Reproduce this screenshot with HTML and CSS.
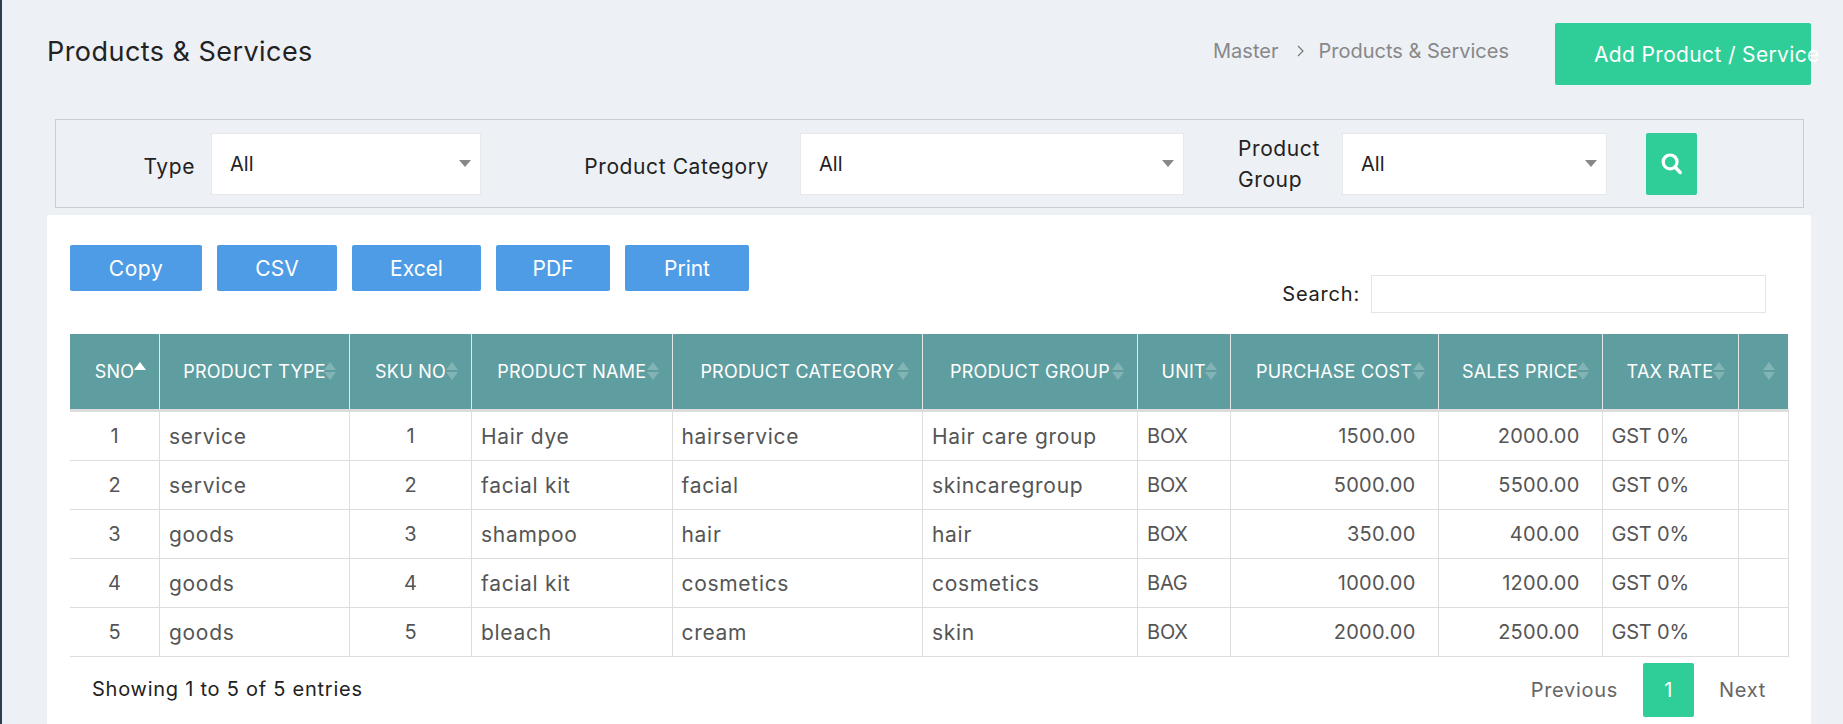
FILE: index.html
```html
<!DOCTYPE html>
<html lang="en">
<head>
    <meta charset="UTF-8">
    <meta name="viewport" content="width=device-width, initial-scale=1.0">
    <title>Products &amp; Services</title>
    <link rel="stylesheet" href="styles.css">
</head>
<body>
    <div class="page">
        <div class="page-header">
            <h1 class="page-title">Products &amp; Services</h1>
            <div class="breadcrumb">
                <span>Master</span>
                <svg class="crumb-sep" width="7" height="12" viewBox="0 0 7 12"><path d="M1 1l5 5-5 5" fill="none" stroke="#777" stroke-width="1.2"/></svg>
                <span>Products &amp; Services</span>
            </div>
            <button class="btn-add">Add Product / Service</button>
        </div>

        <div class="filter-bar">
            <label class="filter-label label-type">Type</label>
            <div class="select select-type">All</div>
            <label class="filter-label label-category">Product Category</label>
            <div class="select select-category">All</div>
            <label class="filter-label label-group">Product Group</label>
            <div class="select select-group">All</div>
            <button class="btn-search">
                <svg width="23" height="23" viewBox="0 0 20 20"><circle cx="8.8" cy="8.6" r="6" fill="none" stroke="#fff" stroke-width="2.8"/><path d="M13 13l4.6 4.8" stroke="#fff" stroke-width="3" stroke-linecap="round"/></svg>
            </button>
        </div>

        <div class="card">
            <div class="toolbar">
                <div class="export-buttons">
                    <button class="btn-export btn-copy">Copy</button>
                    <button class="btn-export btn-csv">CSV</button>
                    <button class="btn-export btn-excel">Excel</button>
                    <button class="btn-export btn-pdf">PDF</button>
                    <button class="btn-export btn-print">Print</button>
                </div>
                <div class="search-box">
                    <label>Search:</label>
                    <input type="text">
                </div>
            </div>

            <table class="data-table">
                <colgroup>
                    <col class="col-sno"><col class="col-type"><col class="col-sku"><col class="col-name"><col class="col-cat"><col class="col-group"><col class="col-unit"><col class="col-cost"><col class="col-price"><col class="col-tax"><col class="col-action">
                </colgroup>
                <thead>
                    <tr>
                        <th class="sort-active">SNO</th>
                        <th>PRODUCT TYPE</th>
                        <th>SKU NO</th>
                        <th>PRODUCT NAME</th>
                        <th>PRODUCT CATEGORY</th>
                        <th>PRODUCT GROUP</th>
                        <th>UNIT</th>
                        <th>PURCHASE COST</th>
                        <th>SALES PRICE</th>
                        <th>TAX RATE</th>
                        <th></th>
                    </tr>
                </thead>
                <tbody>
                    <tr><td class="center">1</td><td>service</td><td class="center">1</td><td>Hair dye</td><td>hairservice</td><td>Hair care group</td><td class="caps">BOX</td><td class="num">1500.00</td><td class="num">2000.00</td><td class="caps">GST 0%</td><td></td></tr>
                    <tr><td class="center">2</td><td>service</td><td class="center">2</td><td>facial kit</td><td>facial</td><td>skincaregroup</td><td class="caps">BOX</td><td class="num">5000.00</td><td class="num">5500.00</td><td class="caps">GST 0%</td><td></td></tr>
                    <tr><td class="center">3</td><td>goods</td><td class="center">3</td><td>shampoo</td><td>hair</td><td>hair</td><td class="caps">BOX</td><td class="num">350.00</td><td class="num">400.00</td><td class="caps">GST 0%</td><td></td></tr>
                    <tr><td class="center">4</td><td>goods</td><td class="center">4</td><td>facial kit</td><td>cosmetics</td><td>cosmetics</td><td class="caps">BAG</td><td class="num">1000.00</td><td class="num">1200.00</td><td class="caps">GST 0%</td><td></td></tr>
                    <tr><td class="center">5</td><td>goods</td><td class="center">5</td><td>bleach</td><td>cream</td><td>skin</td><td class="caps">BOX</td><td class="num">2000.00</td><td class="num">2500.00</td><td class="caps">GST 0%</td><td></td></tr>
                </tbody>
            </table>

            <div class="table-footer">
                <div class="table-info">Showing 1 to 5 of 5 entries</div>
                <div class="pagination">
                    <span class="page-link link-prev">Previous</span>
                    <span class="page-current">1</span>
                    <span class="page-link link-next">Next</span>
                </div>
            </div>
        </div>
    </div>
</body>
</html>
```

FILE: styles.css
```css
body {
    font-family: 'Inter', 'Liberation Sans', sans-serif;
    margin: 0;
    padding: 0;
    background: #edf0f5;
    color: #222;
    height: 100vh;
    overflow: hidden;
}

button {
    font-family: inherit;
    border: none;
    cursor: pointer;
}

.page {
    border-left: 2px solid #2c3e50;
    height: 100vh;
    box-sizing: border-box;
    padding: 23px 32px 0 45px;
    overflow: hidden;
}

/* header */
.page-header {
    display: flex;
    align-items: flex-start;
    height: 62px;
}

.page-title {
    margin: 13px 0 0;
    font-size: 27px;
    line-height: 32px;
    letter-spacing: 0.45px;
    font-weight: 400;
    color: #222;
    flex: 1;
}

.breadcrumb {
    display: flex;
    align-items: center;
    gap: 14px;
    margin: 16px 46px 0 0;
    font-size: 20px;
    line-height: 24px;
    color: #888;
}

.crumb-sep {
    margin-left: 5px;
}

.btn-add {
    width: 256px;
    height: 62px;
    padding: 0 0 0 39px;
    background: #2fce98;
    color: #fff;
    font-size: 21px;
    letter-spacing: 0.35px;
    text-align: left;
    white-space: nowrap;
    border-radius: 2px;
    overflow: visible;
}

/* filter */
.filter-bar {
    display: flex;
    align-items: center;
    height: 89px;
    box-sizing: border-box;
    margin: 34px 7px 0 8px;
    border: 1px solid #c9cdd1;
}

.filter-label {
    font-size: 21px;
    line-height: 31px;
    letter-spacing: 0.6px;
    color: #222;
}

.label-type {
    width: 139px;
    margin-top: 5px;
    text-align: right;
}

.label-category {
    width: 288px;
    margin-top: 5px;
    text-align: right;
    white-space: nowrap;
}

.label-group {
    width: 85px;
    margin-left: 54px;
    margin-right: -4px;
}

.select {
    position: relative;
    height: 62px;
    box-sizing: border-box;
    padding: 0 18px;
    line-height: 60px;
    font-size: 20px;
    background: #fff;
    border: 1px solid #e6e8ea;
    color: #222;
}

.select::after {
    content: "";
    position: absolute;
    right: 9px;
    top: 26px;
    border-left: 6px solid transparent;
    border-right: 6px solid transparent;
    border-top: 7px solid #888;
}

.select-type {
    width: 270px;
    margin-left: 16px;
}

.select-category {
    width: 384px;
    margin-left: 31px;
}

.select-group {
    width: 265px;
    margin-left: 23px;
}

.btn-search {
    width: 51px;
    height: 62px;
    margin-left: 39px;
    padding: 0;
    background: #2fce98;
    border-radius: 2px;
    display: flex;
    align-items: center;
    justify-content: center;
}

/* card */
.card {
    margin-top: 7px;
    height: 600px;
    box-sizing: border-box;
    padding: 30px 23px 0;
    background: #fff;
    border-radius: 3px;
}

.toolbar {
    display: flex;
    justify-content: space-between;
    align-items: flex-start;
    height: 89px;
}

.export-buttons {
    display: flex;
}

.btn-export {
    height: 46px;
    padding: 0;
    background: #4f9ce6;
    color: #fff;
    font-size: 21px;
    border-radius: 2px;
}

.btn-copy { width: 132px; letter-spacing: 0.6px; }
.btn-csv { width: 120px; margin-left: 15px; }
.btn-excel { width: 129px; margin-left: 15px; }
.btn-pdf { width: 114px; margin-left: 15px; }
.btn-print { width: 124px; margin-left: 15px; }

.search-box {
    display: flex;
    align-items: center;
    gap: 11px;
    margin: 30px 22px 0 0;
    font-size: 20px;
    letter-spacing: 0.8px;
    color: #222;
}

.search-box input {
    width: 395px;
    height: 38px;
    box-sizing: border-box;
    border: 1px solid #e3e5e7;
    background: #fff;
    outline: none;
}

/* table */
.data-table {
    table-layout: fixed;
    width: 1718px;
    border-collapse: collapse;
    font-size: 21px;
    letter-spacing: 0.7px;
    color: #555;
}

.col-sno { width: 89.5px; }
.col-type { width: 190px; }
.col-sku { width: 122px; }
.col-name { width: 200.5px; }
.col-cat { width: 250.5px; }
.col-group { width: 215px; }
.col-unit { width: 92.5px; }
.col-cost { width: 208px; }
.col-price { width: 164px; }
.col-tax { width: 136px; }
.col-action { width: 50px; }

.data-table th {
    position: relative;
    height: 75px;
    padding: 0;
    background: #5f9ea0;
    color: #fff;
    font-size: 18px;
    letter-spacing: 0.25px;
    font-weight: 400;
    text-align: center;
    border-left: 1px solid #e3e6e6;
    border-bottom: 3px solid #dddddd;
    white-space: nowrap;
}

.data-table th:first-child {
    border-left: none;
}

/* sort arrows */
.data-table th::before,
.data-table th::after {
    content: "";
    position: absolute;
    right: 13px;
    border-left: 6px solid transparent;
    border-right: 6px solid transparent;
}

.data-table th::before {
    top: 28px;
    border-bottom: 8px solid rgba(255, 255, 255, 0.22);
}

.data-table th::after {
    top: 38px;
    border-top: 8px solid rgba(255, 255, 255, 0.22);
}

.data-table th.sort-active::before {
    border-bottom-color: #fff;
}

.data-table th.sort-active::after {
    display: none;
}

.data-table td {
    height: 48px;
    padding: 0 9px;
    border: 1px solid #dddddd;
    white-space: nowrap;
}

.data-table td:first-child {
    border-left: none;
}

.data-table td.center {
    text-align: center;
    font-size: 20px;
    letter-spacing: 0;
}

.data-table td.caps {
    font-size: 20px;
    letter-spacing: -0.2px;
}

.data-table td.num {
    text-align: right;
    padding-right: 22px;
    font-size: 20px;
    letter-spacing: 0.25px;
}

/* footer */
.table-footer {
    display: flex;
    justify-content: space-between;
    align-items: center;
    margin-top: 6px;
    padding: 0 22px;
}

.table-info {
    font-size: 20px;
    letter-spacing: 0.75px;
    color: #222;
    padding-bottom: 3px;
}

.pagination {
    display: flex;
    align-items: center;
    font-size: 20px;
    letter-spacing: 0.7px;
    color: #666;
}

.page-current {
    width: 51px;
    height: 54px;
    line-height: 54px;
    text-align: center;
    background: #2fce98;
    color: #fff;
    border-radius: 2px;
    margin: 0 25px;
}
```
